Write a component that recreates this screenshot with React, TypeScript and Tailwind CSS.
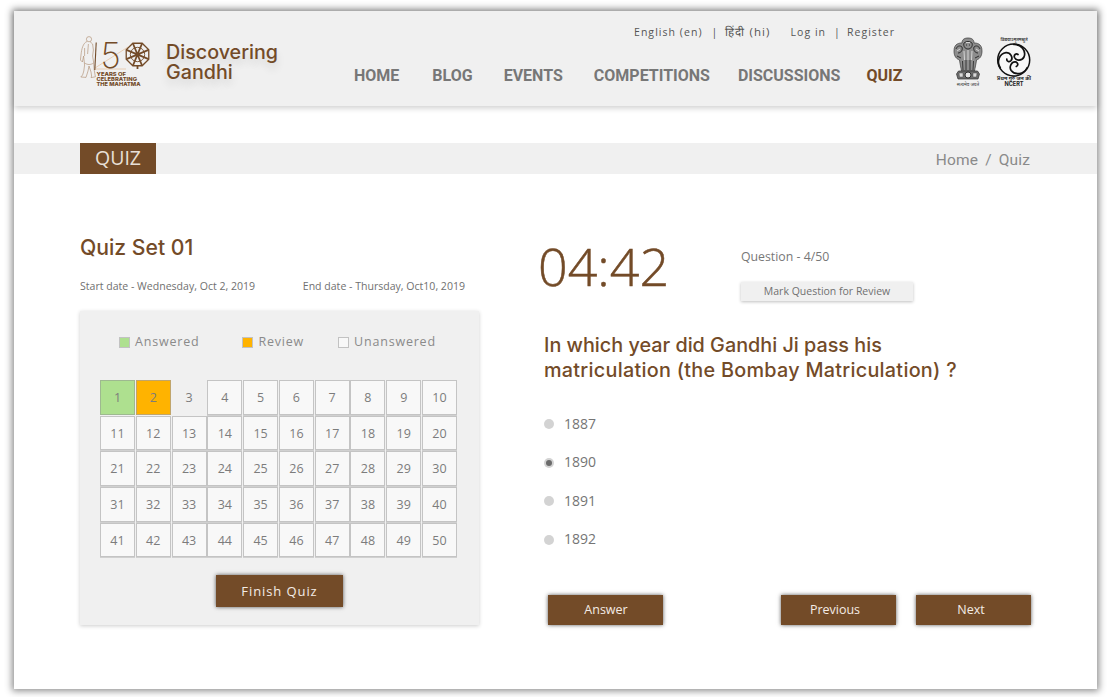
import React from "react";

const brown = "#734b28";

function Logo150() {
  const spokes = Array.from({ length: 4 }, (_, i) => (i * Math.PI) / 4 + Math.PI / 8);
  const rim = Array.from({ length: 8 }, (_, i) => {
    const a = (i * Math.PI) / 4 + Math.PI / 8;
    return `${57.5 + Math.cos(a) * 12.2},${18.5 + Math.sin(a) * 12.2}`;
  }).join(" ");
  return (
    <svg width="70" height="56" viewBox="0 -4 70 56" fill="none" className="shrink-0">
      <g stroke="#b08f74" strokeWidth="0.65" fill="none">
        <circle cx="9" cy="3.2" r="2.6" />
        <path d="M7 5.5 C3 7 1.6 13 1 19 L0.4 24 L2.4 26 L3.6 20 L4.6 29 L3.8 35 L2.6 39 L0.8 41 L6 41.4 L8 35 L9 30 L11 36 L11.6 40 L11 41.6 L15.4 40.8 L14.2 34 L13.6 26 L12.6 20 L13.4 14 L12.6 8 L10 5.6" />
        <path d="M4.6 27 C7.6 29 10.6 29 13.6 27" />
        <path d="M4.6 12 L4.6 20 M8.4 8 L7.6 18" />
      </g>
      <path d="M15 32 L48 11 M15 33 L46 33" stroke="#e6c5a6" strokeWidth="0.8" />
      <path d="M16.2 6.5 L14.8 34" stroke={brown} strokeWidth="1.1" />
      <text x="20.5" y="32" fontFamily="Inter, sans-serif" fontWeight="200" fontSize="35" fill={brown}>5</text>
      <g stroke={brown} fill="none">
        <polygon points={rim} strokeWidth="1.3" />
        <circle cx="57.5" cy="18.5" r="7.2" strokeWidth="0.9" />
        {spokes.map((a, i) => (
          <line key={i} x1={57.5 - Math.cos(a) * 12} y1={18.5 - Math.sin(a) * 12} x2={57.5 + Math.cos(a) * 12} y2={18.5 + Math.sin(a) * 12} strokeWidth="1.7" />
        ))}
        <path d="M57.5 30 L57.5 33" strokeWidth="1.8" />
      </g>
      <circle cx="57.5" cy="18.5" r="2.4" fill={brown} />
      <g fontFamily="Inter, sans-serif" fontWeight="800" fontSize="5.2" fill={brown}>
        <text x="16.5" y="39.7" textLength="29.5" lengthAdjust="spacingAndGlyphs">YEARS OF</text>
        <text x="16.5" y="44.8" textLength="40.5" lengthAdjust="spacingAndGlyphs">CELEBRATING</text>
        <text x="16.5" y="49.8" textLength="44" lengthAdjust="spacingAndGlyphs">THE MAHATMA</text>
      </g>
    </svg>
  );
}

function Emblem() {
  return (
    <svg width="30" height="50" viewBox="0 0 30 50" className="shrink-0">
      <path d="M1 14 C1 6 7 6 9 6 C9 2 12 1 15 1 C18 1 21 2 21 6 C23 6 29 6 29 14 C29 20 26 22 23.5 23 C23 27 22 31 21.5 34 L8.5 34 C8 31 7 27 6.5 23 C4 22 1 20 1 14 Z" fill="#8d8d8d" stroke="#3a3a3a" strokeWidth="0.7" />
      <g stroke="#2e2e2e" strokeWidth="1" fill="none">
        <path d="M3 12 C4 9 7 8 9 10 C10 13 8 16 5 16 M27 12 C26 9 23 8 21 10 C20 13 22 16 25 16" />
        <path d="M11 6 C13 4 17 4 19 6 C20 9 18 12 15 12 C12 12 10 9 11 6 Z" />
        <path d="M13 8 L14 8 M16 8 L17 8 M4 19 L8 21 M26 19 L22 21" />
      </g>
      <g stroke="#e9e9e9" strokeWidth="0.8">
        <path d="M4 14 L7 12 M26 14 L23 12 M13 5.5 L17 5.5 M15 13 L15 23 M11 14 L11.5 23 M19 14 L18.5 23" />
      </g>
      <g stroke="#2e2e2e" strokeWidth="0.9">
        <path d="M9.5 24 L10 33 M13 23 L13 33 M17 23 L17 33 M20.5 24 L20 33" />
      </g>
      <path d="M5.5 34 L24.5 34 L26.5 37 L25 42 L5 42 L3.5 37 Z" fill="#6d6d6d" stroke="#2e2e2e" strokeWidth="0.7" />
      <circle cx="15" cy="38" r="3" fill="#e3e3e3" stroke="#222" strokeWidth="0.9" />
      <path d="M6 36 L10 36 L10 40 L6.5 40 Z M20 36 L24 36 L23.5 40 L20 40 Z" fill="#d8d8d8" stroke="#333" strokeWidth="0.4" />
      <text x="15" y="48.5" textAnchor="middle" fontFamily="'Noto Sans', sans-serif" fontSize="4.6" fill="#333">सत्यमेव जयते</text>
    </svg>
  );
}

function Ncert() {
  const arm = "M17.7 7.5 C25 7 30.5 14 28 20 C26 24 20 24 18.5 20.5 C17.5 18 20 16 22 17.5";
  return (
    <svg width="36" height="50" viewBox="0 0 36 50" fill="none" className="shrink-0">
      <text x="18" y="3.8" textAnchor="middle" fontFamily="'Noto Sans', sans-serif" fontWeight="600" fontSize="4.4" fill="#333">विद्ययाऽमृतमश्नुते</text>
      <circle cx="17.7" cy="23" r="16" stroke="#111" strokeWidth="1.5" fill="#f8f8f8" />
      <g stroke="#111" strokeWidth="1.7" fill="none" strokeLinecap="round">
        <path d={arm} />
        <path d={arm} transform="rotate(120 17.7 23)" />
        <path d={arm} transform="rotate(240 17.7 23)" />
      </g>
      <text x="18" y="43.2" textAnchor="middle" fontFamily="'Noto Sans', sans-serif" fontWeight="700" fontSize="5.2" fill="#222">प्रथम गुरु जन की</text>
      <text x="18" y="49.4" textAnchor="middle" fontFamily="Inter, sans-serif" fontWeight="700" fontSize="5.6" fill="#222">NCERT</text>
    </svg>
  );
}

function Btn({ children, cls }: { children: React.ReactNode; cls: string }) {
  return (
    <button className={`${cls} flex items-center justify-center bg-[#734b28] text-[#f3ece6] shadow-[0_0_4px_rgba(0,0,0,0.65)]`}>
      {children}
    </button>
  );
}

function Cell({ n }: { n: number }) {
  let cls = "bg-[#f8f8f8] border border-[#c4c4c4] shadow-[0_1px_0_#d0d0d0]";
  if (n === 1) cls = "bg-[#aee08f] border border-[#9eb990]";
  if (n === 2) cls = "bg-[#ffb300] border border-[#c0a56c]";
  if (n === 3) cls = "border border-transparent";
  return <div className={`${cls} h-[34.7px] pt-[2px] flex items-center justify-center text-[12.5px] text-[#7c7c7c]`}>{n}</div>;
}

function Legend({ color, label, cls }: { color: string; label: string; cls?: string }) {
  return (
    <div className={`flex items-center gap-[5px] ${cls ?? ""}`}>
      <span className={`w-[11px] h-[11px] border border-[#c2c2c2] ${color}`} />
      <span className="text-[12.5px] tracking-[0.8px] text-[#8a8a8a]">{label}</span>
    </div>
  );
}

function Option({ label, selected }: { label: string; selected?: boolean }) {
  return (
    <div className="flex items-center h-[20px] text-[14px] text-[#757575]">
      <span className="w-[10px] h-[10px] rounded-full bg-[#d3d3d3] flex items-center justify-center mr-[10px] mt-[2px]">
        {selected && <span className="w-[6px] h-[6px] rounded-full bg-[#6b6b6b]" />}
      </span>
      {label}
    </div>
  );
}

export default function App() {
  const nav = ["HOME", "BLOG", "EVENTS", "COMPETITIONS", "DISCUSSIONS"];
  const navGap = ["mr-[33px]", "mr-[31px]", "mr-[31px]", "mr-[28px]", "mr-[26px]"];
  return (
    <div className="w-[1110px] h-[697px] bg-white overflow-hidden pt-[11px] pl-[14px] pr-[13px] font-['Open_Sans',sans-serif]">
      <div className="h-[678px] bg-white shadow-[0_0_7px_2px_rgba(0,0,0,0.45)]">
        <header className="h-[95px] bg-[#f0f0f0] shadow-[0_2px_6px_rgba(0,0,0,0.2)] flex pl-[66px]">
          <div className="pt-[21px]"><Logo150 /></div>
          <div className="ml-[16px] w-[120px] pt-[31px] text-[19.7px] leading-[20px] font-medium text-[#734b28] font-['Inter',sans-serif] [text-shadow:0_6px_8px_rgba(0,0,0,0.12)]">
            <div>Discovering</div>
            <div>Gandhi</div>
          </div>
          <div className="ml-[68px] w-[550px] flex flex-col">
            <div className="pt-[13px] h-[40px] flex text-[10.5px] tracking-[0.1em] text-[#555] leading-[16px] pl-[280px] whitespace-nowrap">
              <span>English (en)</span>
              <span className="ml-[9px] mr-[7px]">|</span>
              <span className="text-[11.5px]">हिंदी (hi)</span>
              <span className="ml-[20px]">Log in</span>
              <span className="ml-[8px] mr-[6px]">|</span>
              <span>Register</span>
            </div>
            <nav className="flex pt-[15px] font-['Roboto',sans-serif] font-bold text-[16px] leading-[20px] text-[#777] whitespace-nowrap">
              {nav.map((n, i) => <a key={n} className={navGap[i]}>{n}</a>)}
              <a className="text-[#734b28]">QUIZ</a>
            </nav>
          </div>
          <div className="ml-[49px] pt-[26px] flex gap-[13px]">
            <Emblem />
            <Ncert />
          </div>
        </header>

        <div className="mt-[37px] h-[31px] bg-[#f0f0f0] flex items-center justify-between pl-[66px] pr-[67px]">
          <div className="w-[76px] h-[31px] bg-[#734b28] text-[#e8e0d8] text-[19.5px] pb-[2px] flex items-center justify-center">QUIZ</div>
          <div className="font-['Roboto',sans-serif] text-[15.5px] text-[#8a8a8a] tracking-[0.01em] pt-[4px] flex">
            <span>Home</span><span className="mx-[7px]">/</span><span>Quiz</span>
          </div>
        </div>

        <main className="flex pl-[66px]">
          <section className="w-[399px] pt-[58px]">
            <h1 className="text-[21.2px] leading-[30px] font-medium text-[#734b28] font-['Inter',sans-serif]">Quiz Set 01</h1>
            <div className="mt-[17px] flex justify-between text-[10.55px] leading-[14px] text-[#707070] pr-[14px]">
              <span>Start date - Wednesday, Oct 2, 2019</span>
              <span>End date - Thursday, Oct10, 2019</span>
            </div>
            <div className="mt-[18px] h-[314px] bg-[#f0f0f0] shadow-[0_1px_4px_rgba(0,0,0,0.2)] px-[20px] pt-[23px]">
              <div className="flex h-[16px] pl-[19px]">
                <Legend color="bg-[#aee08f]" label="Answered" />
                <Legend color="bg-[#ffb300]" label="Review" cls="ml-[43px]" />
                <Legend color="bg-[#f8f8f8]" label="Unanswered" cls="ml-[34px]" />
              </div>
              <div className="mt-[30px] w-[357px] grid grid-cols-10 gap-x-[0.8px] gap-y-[1px]">
                {Array.from({ length: 50 }, (_, i) => <Cell key={i} n={i + 1} />)}
              </div>
              <div className="mt-[17.5px] flex pl-[116px]">
                <Btn cls="w-[127px] h-[32px] pt-[1px] text-[13px] tracking-[0.07em]">Finish Quiz</Btn>
              </div>
            </div>
          </section>

          <section className="ml-[60px] w-[492px]">
            <div className="flex">
              <div className="pt-[58px] text-[52px] leading-[68px] font-light [-webkit-text-stroke:0.5px_#734b28] text-[#734b28] w-[202px] -ml-[1px]">04:42</div>
              <div className="pt-[76px] pl-[1px]">
                <div className="text-[12.3px] leading-[14px] text-[#777]">Question - 4/50</div>
                <div className="mt-[18px] w-[172px] h-[19px] bg-[#f0f0f0] shadow-[0_1px_3px_rgba(0,0,0,0.25)] text-[10.5px] text-[#707070] flex items-center justify-center">Mark Question for Review</div>
              </div>
            </div>
            <h2 className="mt-[32px] pl-[5px] text-[19.8px] leading-[25px] font-medium text-[#734b28] font-['Inter',sans-serif] whitespace-nowrap">
              In which year did Gandhi Ji pass his<br /><span className="tracking-[0.28px]">matriculation (the Bombay Matriculation) ?</span>
            </h2>
            <div className="mt-[30px] pl-[5px] flex flex-col gap-[18.5px]">
              <Option label="1887" />
              <Option label="1890" selected />
              <Option label="1891" />
              <Option label="1892" />
            </div>
            <div className="mt-[46px] pl-[9px] flex text-[12.5px]">
              <Btn cls="w-[115px] h-[30px] pl-[1px] pt-[2px]">Answer</Btn>
              <Btn cls="w-[115px] h-[30px] ml-[118px] pr-[7px] pt-[2px]">Previous</Btn>
              <Btn cls="w-[115px] h-[30px] ml-[20px] pr-[5px] pt-[2px]">Next</Btn>
            </div>
          </section>
        </main>
      </div>
    </div>
  );
}
